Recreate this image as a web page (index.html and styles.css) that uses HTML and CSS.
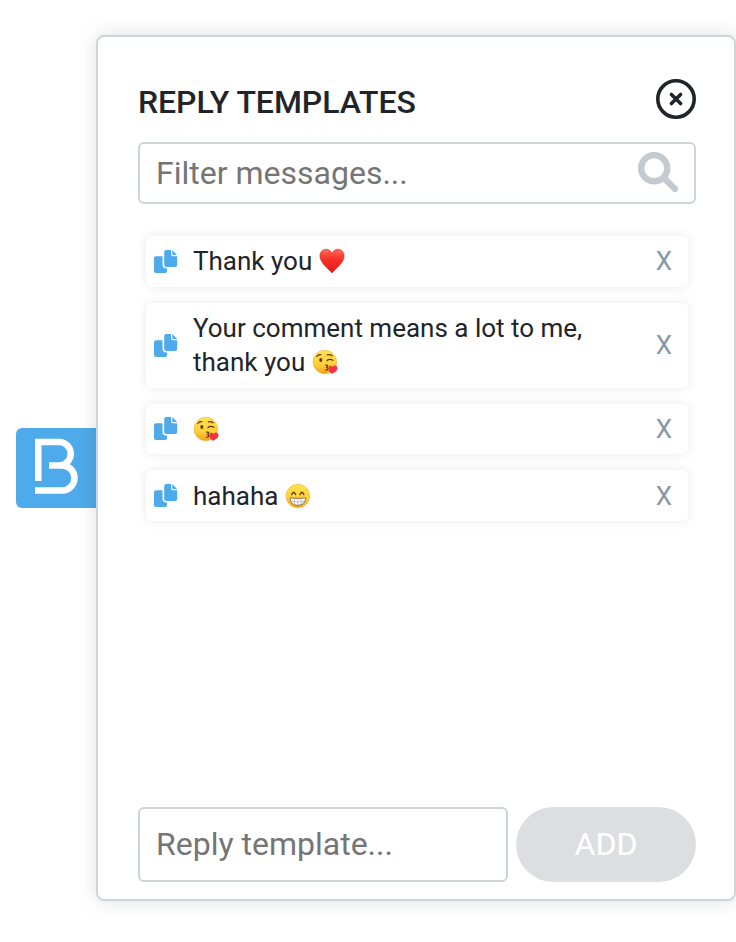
FILE: index.html
```html
<!DOCTYPE html>
<html lang="en">
<head>
    <meta charset="UTF-8">
    <meta name="viewport" content="width=device-width, initial-scale=1.0">
    <title>Reply templates</title>
    <link rel="stylesheet" href="styles.css">
</head>
<body>
<svg class="sprite" aria-hidden="true">
    <defs>
        <linearGradient id="face-fill" x1="0" y1="0" x2="0" y2="1">
            <stop offset="0" stop-color="#ffe34f"/>
            <stop offset="0.6" stop-color="#ffcf3a"/>
            <stop offset="1" stop-color="#f2a21c"/>
        </linearGradient>
        <linearGradient id="heart-fill" x1="0" y1="0" x2="0" y2="1">
            <stop offset="0" stop-color="#ff6557"/>
            <stop offset="0.45" stop-color="#f92f28"/>
            <stop offset="1" stop-color="#dc1a16"/>
        </linearGradient>
    </defs>
    <symbol id="copy" viewBox="0 0 24 24">
        <path d="M2 6.2h6.500V14.500a4 4 0 0 0 4 4h.6V21a2 2 0 0 1-2 2H2a2 2 0 0 1-2-2V8.200a2 2 0 0 1 2-2z"/>
        <path d="M12.200 0H17v4.200a2 2 0 0 0 2 2h4.200V15a2 2 0 0 1-2 2h-9a2 2 0 0 1-2-2V2a2 2 0 0 1 2-2z"/>
        <path d="M18.300 0l4.800 4.900h-4.800z"/>
    </symbol>
    <symbol id="heart" viewBox="0 0 26 26">
        <path fill="url(#heart-fill)" stroke="#cf1c18" stroke-width="0.5" d="M13 25C10 21 .9 15 .9 8 .9 4 3.700 1.200 7 1.200c2.700 0 5 1.600 6 4.100 1-2.500 3.300-4.100 6-4.100 3.300 0 6.100 2.800 6.100 6.800C25.100 15 16 21 13 25z"/>
        <path fill="#fff" fill-opacity="0.25" d="M3.500 6C4.500 3.300 7.500 2.500 9.500 3.800 7.500 4 5 4.500 3.500 6zM17 4c2-1 4.500-.5 5.500 1.500C21 4.500 19 4 17 4z"/>
    </symbol>
    <symbol id="kiss" viewBox="0 0 26 26">
        <circle cx="12.800" cy="13" r="11.800" fill="url(#face-fill)" stroke="#e9a427" stroke-width="0.500"/>
        <ellipse cx="8.800" cy="11" rx="1.500" ry="2.100" fill="#60370d"/>
        <path fill="none" stroke="#60370d" stroke-width="1.200" stroke-linecap="round" d="M4.800 7.500Q6.300 5.200 8.800 5.700M15.300 5.800Q18 5 20 6.800M15 11.500Q17.500 9.300 21 11.300M13.700 16.200c2.800-.4 2.700 2 .3 2.200 2.900 0 2.700 2.900-.6 2.600"/>
        <path fill="#f33345" d="M19.500 24.800c-2.700-2.600-3.600-4.300-2.800-6.500.8-1.900 3-1.800 4.100-.3.900-1.600 3-2 4.100-.6 1.200 1.700.6 3.600-1 5-1.200 1-2.600 1.800-4.400 2.400z"/>
    </symbol>
    <symbol id="grin" viewBox="0 0 26 26">
        <circle cx="12.800" cy="13" r="11.800" fill="url(#face-fill)" stroke="#e9a427" stroke-width="0.500"/>
        <path fill="none" stroke="#60370d" stroke-width="1.400" stroke-linecap="round" d="M6.800 11.500Q8.700 7 10.600 11.500M15 11.500Q16.900 7 18.800 11.500"/>
        <path fill="#fff" stroke="#84705c" stroke-width="1" stroke-linejoin="round" d="M5 14.800q7.800 1.400 15.600 0c0 4.500-3.300 7.500-7.800 7.500S5 19.300 5 14.800z"/>
        <path fill="none" stroke="#a89c90" stroke-width="0.600" d="M5.800 18.200q7 1.400 14 0M9.500 15.500v6M12.800 15.500v6.500M16.100 15.500v6"/>
    </symbol>
</svg>

<div class="extension">
    <div class="toggle">
        <svg class="logo" viewBox="0 0 80 80">
            <path d="M22.300 53V14H44a11.800 11.800 0 0 1 0 23.500H33M44 37.500H46a12.500 12.500 0 0 1 0 25H19"/>
        </svg>
    </div>

    <div class="panel">
        <div class="header">
            <h1 class="title">REPLY TEMPLATES</h1>
            <svg class="close" viewBox="0 0 40 40">
                <circle cx="20" cy="20" r="18.200"/>
                <path d="M15.400 15.400l9.200 9.200M24.600 15.400l-9.200 9.200"/>
            </svg>
        </div>

        <div class="search">
            <input class="search-input" type="text" placeholder="Filter messages...">
            <svg class="search-icon" viewBox="0 0 40 40">
                <circle cx="16.200" cy="16.200" r="13.100"/>
                <path d="M26 26l11 11"/>
            </svg>
        </div>

        <ul class="templates">
            <li class="template">
                <svg class="copy"><use href="#copy"/></svg>
                <span class="message">Thank you <svg class="emoji"><use href="#heart"/></svg></span>
                <span class="remove">X</span>
            </li>
            <li class="template">
                <svg class="copy"><use href="#copy"/></svg>
                <span class="message">Your comment means a lot to me, thank you <svg class="emoji"><use href="#kiss"/></svg></span>
                <span class="remove">X</span>
            </li>
            <li class="template">
                <svg class="copy"><use href="#copy"/></svg>
                <span class="message"><svg class="emoji"><use href="#kiss"/></svg></span>
                <span class="remove">X</span>
            </li>
            <li class="template">
                <svg class="copy"><use href="#copy"/></svg>
                <span class="message">hahaha <svg class="emoji"><use href="#grin"/></svg></span>
                <span class="remove">X</span>
            </li>
        </ul>

        <div class="add-form">
            <input class="add-input" type="text" placeholder="Reply template...">
            <button class="add-button" disabled>ADD</button>
        </div>
    </div>
</div>
</body>
</html>
```

FILE: styles.css
```css
:root {
    --blue: #4eaaea;
    --border: #ced4da;
    --text: #212529;
}

* {
    box-sizing: border-box;
}

body {
    height: 942px;
    margin: 0;
    padding-top: 35px;
    background-color: #fff;
    color: var(--text);
    font-family: Roboto, sans-serif;
    overflow: hidden;
}

.sprite {
    display: block;
    width: 0;
    height: 0;
}

.extension {
    display: flex;
    align-items: center;
    height: 866px;
    padding-left: 16px;
}

.toggle {
    width: 80px;
    height: 80px;
    background-color: var(--blue);
    border-radius: 6px 0 0 6px;
}

.logo {
    display: block;
    fill: none;
    stroke: #fff;
    stroke-width: 6.5;
}

.panel {
    position: relative;
    display: flex;
    flex-direction: column;
    width: 640px;
    height: 866px;
    padding: 42px 38px 17px 40px;
    background-color: #fff;
    border: 2px solid var(--border);
    border-radius: 8px;
    box-shadow: 0 0 20px rgba(0, 0, 0, 0.13);
}

.header {
    display: flex;
    justify-content: space-between;
    height: 63px;
}

.title {
    margin: 4px 0 0;
    font-size: 32px;
    font-weight: 500;
    line-height: 38px;
    letter-spacing: -0.05px;
}

.close {
    width: 40px;
    height: 40px;
    fill: none;
    stroke: var(--text);
    stroke-width: 3.6;
    stroke-linecap: round;
}

.search {
    display: flex;
    align-items: center;
    height: 62px;
    padding: 0 16px;
    border: 2px solid var(--border);
    border-radius: 6px;
}

.search-input {
    flex: 1;
    min-width: 0;
    padding: 0;
    border: none;
    outline: none;
    font-family: inherit;
    font-size: 32px;
}

.search-input::placeholder,
.add-input::placeholder {
    color: #757575;
}

.search-icon {
    width: 40px;
    height: 40px;
    margin-bottom: 2px;
    fill: none;
    stroke: #c4cad0;
    stroke-width: 6.3;
    stroke-linecap: round;
}

.templates {
    display: flex;
    flex-direction: column;
    gap: 16px;
    flex: 1;
    margin: 32px 8px 0;
    padding: 0;
    list-style: none;
}

.template {
    display: flex;
    align-items: center;
    padding: 8.4px 16px 8.4px 8px;
    border-radius: 6px;
    background-color: #fff;
    box-shadow: 0 0 12px rgba(0, 0, 0, 0.09);
    font-size: 26px;
    line-height: 34px;
}

.copy {
    flex: none;
    width: 24px;
    height: 24px;
    margin-top: 1px;
    fill: var(--blue);
}

.message {
    flex: 1;
    margin: 0 60px 0 15px;
}

.emoji {
    width: 26px;
    height: 26px;
    margin: -4px 0;
    vertical-align: 0;
}

.remove {
    color: #8997a5;
}

.add-form {
    display: flex;
    gap: 8px;
    height: 75px;
}

.add-input {
    width: 370px;
    padding: 0 16px 2px;
    border: 2px solid var(--border);
    border-radius: 6px;
    font-family: inherit;
    font-size: 32px;
}

.add-button {
    flex: 1;
    padding-bottom: 3px;
    border: none;
    border-radius: 38px;
    background-color: #dddee2;
    color: #fff;
    font-family: inherit;
    font-size: 32px;
}
```
